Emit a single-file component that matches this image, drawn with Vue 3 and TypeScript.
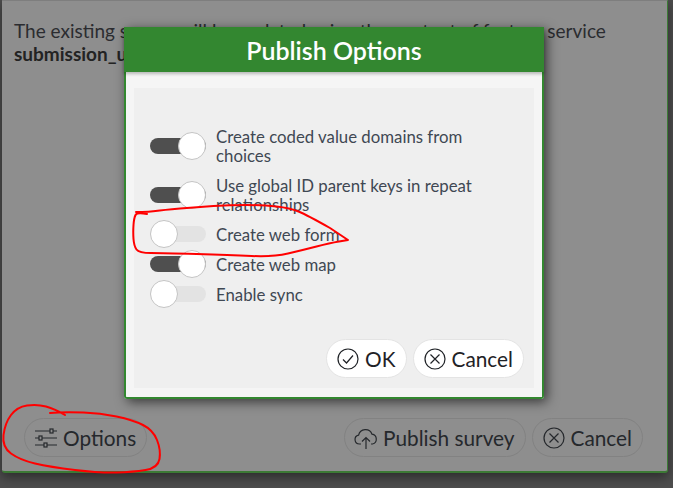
<script setup lang="ts">
interface OptionRow {
  label: string
  on: boolean
}

const options: OptionRow[] = [
  { label: 'Create coded value domains from choices', on: true },
  { label: 'Use global ID parent keys in repeat relationships', on: true },
  { label: 'Create web form', on: false },
  { label: 'Create web map', on: true },
  { label: 'Enable sync', on: false }
]

type Pt = [number, number]

// turn hand traced points into a smooth line
function smooth(pts: Pt[]): string {
  let d = `M${pts[0][0]} ${pts[0][1]}`
  for (let i = 1; i < pts.length - 1; i++) {
    const mx = (pts[i][0] + pts[i + 1][0]) / 2
    const my = (pts[i][1] + pts[i + 1][1]) / 2
    d += ` Q${pts[i][0]} ${pts[i][1]} ${mx} ${my}`
  }
  const last = pts[pts.length - 1]
  return d + ` L${last[0]} ${last[1]}`
}

const formCircle = smooth([
  [147, 214], [137, 212], [134, 218], [133, 232], [134, 246], [139, 253], [163, 253],
  [230, 255], [273, 257], [303, 250], [330, 243], [348, 240]
]) + ' L330 228 ' + smooth([
  [330, 228], [307, 215], [290, 208], [263, 205], [230, 205], [197, 207], [163, 210], [148, 212], [136, 212]
])

const optionsCircle = smooth([
  [65, 415], [55, 409], [37, 404], [17, 407], [5, 423], [2, 447], [20, 460], [50, 467],
  [100, 473], [133, 472], [158, 468], [161, 450], [153, 430], [133, 420], [100, 413], [67, 412], [50, 413]
])
</script>

<template>
  <div class="screen">
    <div class="panel">
      <p class="message">
        The existing survey will be updated using the content of feature service
        <b>submission_update</b>
      </p>
      <div class="footer">
        <button class="btn">
          <svg class="icon" viewBox="0 0 24 24" fill="none" stroke="currentColor" stroke-width="1.2">
            <path d="M1 5H16M19 5H23M1 12H5M8 12H23M1 19H10M13 19H23" />
            <rect x="16" y="3" width="3" height="4" />
            <rect x="5" y="10" width="3" height="4" />
            <rect x="10" y="17" width="3" height="4" />
          </svg>
          Options
        </button>
        <div class="footer-right">
          <button class="btn">
            <svg class="icon" viewBox="0 0 24 24" fill="none" stroke="currentColor" stroke-width="1.2">
              <path d="M7 18H5.5A4.5 4.5 0 0 1 4.6 9.1 7 7 0 0 1 18 8.2 5 5 0 0 1 18.5 18H17" />
              <path d="M12 23V12M8 15.5L12 11.5L16 15.5" />
            </svg>
            Publish survey
          </button>
          <button class="btn">
            <svg class="icon" viewBox="0 0 24 24" fill="none" stroke="currentColor" stroke-width="1.2">
              <circle cx="12" cy="12" r="10" />
              <path d="M7.5 7.5L16.5 16.5M16.5 7.5L7.5 16.5" />
            </svg>
            Cancel
          </button>
        </div>
      </div>
    </div>

    <div class="modal">
      <div class="modal-head">Publish Options</div>
      <div class="modal-body">
        <div class="content">
          <div class="rows">
            <div v-for="opt in options" :key="opt.label" class="row">
              <span :class="{ toggle: true, toggleOn: opt.on }"><i class="knob"></i></span>
              <span class="label">{{ opt.label }}</span>
            </div>
          </div>
          <div class="actions">
            <button class="btn btnLight">
              <svg class="icon" viewBox="0 0 24 24" fill="none" stroke="currentColor" stroke-width="1.2">
                <circle cx="12" cy="12" r="10" />
                <path d="M7 12.5L10.5 16L17 8.5" />
              </svg>
              OK
            </button>
            <button class="btn btnLight">
              <svg class="icon" viewBox="0 0 24 24" fill="none" stroke="currentColor" stroke-width="1.2">
                <circle cx="12" cy="12" r="10" />
                <path d="M7.5 7.5L16.5 16.5M16.5 7.5L7.5 16.5" />
              </svg>
              Cancel
            </button>
          </div>
        </div>
      </div>
    </div>

    <svg class="marks" viewBox="0 0 673 488" fill="none" stroke="#f00" stroke-width="2" stroke-linejoin="round" stroke-linecap="round">
      <path :d="formCircle" />
      <path :d="optionsCircle" />
    </svg>
  </div>
</template>

<style scoped>
.screen {
  position: relative;
  width: 673px;
  height: 488px;
  overflow: hidden;
  background: #4d4d4d;
  font-family: Lato, "Open Sans", sans-serif;
  color: #25282c;
}

.panel {
  display: flex;
  flex-direction: column;
  justify-content: space-between;
  box-sizing: border-box;
  width: 666px;
  height: 473px;
  margin-left: 2px;
  padding: 18px 24px 14px 12px;
  background: #8e8e8e;
  border-top: 1px solid #7e7e7e;
  border-right: 1px solid #3c7a35;
  border-bottom: 2px solid #3c7a35;
  border-radius: 0 0 3px 3px;
  box-shadow: 0 4px 12px rgba(0, 0, 0, 0.45);
}

.message {
  margin: 0;
  font-size: 19px;
  line-height: 23px;
  color: #2b2c30;
}

.message b {
  display: block;
  font-weight: 700;
  color: #232323;
}

.footer {
  display: flex;
  justify-content: space-between;
  padding-left: 10px;
}

.footer-right {
  display: flex;
  gap: 6px;
}

.btn {
  display: flex;
  align-items: center;
  gap: 5px;
  height: 39px;
  padding: 0 10px 0 9px;
  border: 1px solid #828282;
  border-radius: 20px;
  background: #8e8e8e;
  font-family: inherit;
  font-size: 20.8px;
  color: #25282c;
  white-space: nowrap;
}

.btnLight {
  background: #fff;
  border-color: #e4e4e4;
  color: #1f2226;
}

.icon {
  width: 24px;
  height: 24px;
  flex: none;
}

.modal {
  position: absolute;
  left: 124px;
  top: 27px;
  display: flex;
  flex-direction: column;
  box-sizing: border-box;
  width: 420px;
  height: 372px;
  background: #f5f5f5;
  border-radius: 0 0 3px 3px;
  box-shadow: 3px 3px 12px rgba(0, 0, 0, 0.6);
}

.modal-head {
  flex: none;
  height: 45px;
  line-height: 46px;
  text-align: center;
  background: #338730;
  color: #fff;
  font-size: 25px;
  font-weight: 600;
  box-shadow: 0 2px 3px rgba(0, 0, 0, 0.25);
  position: relative;
}

.modal-body {
  flex: 1;
  display: flex;
  min-height: 0;
  padding: 16px 8px 9px 8px;
  border: solid #338730;
  border-width: 0 2px 2px 2px;
  border-radius: 0 0 3px 3px;
}

.content {
  flex: 1;
  display: flex;
  flex-direction: column;
  justify-content: space-between;
  padding: 33px 10px 10px 16px;
  background: #efefef;
}

.rows {
  display: flex;
  flex-direction: column;
}

.row {
  display: flex;
  align-items: center;
  gap: 10px;
  padding: 5.5px 0;
}

.toggle {
  position: relative;
  flex: none;
  width: 56px;
  height: 16px;
  border-radius: 8px;
  background: #e3e3e3;
}

.toggleOn {
  background: #4f4f4f;
}

.knob {
  position: absolute;
  left: 0;
  top: -6px;
  box-sizing: border-box;
  width: 28px;
  height: 28px;
  border: 1px solid #c4c4c4;
  border-radius: 50%;
  background: #fff;
}

.toggleOn .knob {
  left: 28px;
}

.label {
  width: 280px;
  font-size: 16.8px;
  line-height: 19px;
  color: #3f4853;
}

.actions {
  display: flex;
  justify-content: flex-end;
  gap: 6px;
}

.marks {
  position: absolute;
  inset: 0;
  width: 673px;
  height: 488px;
  pointer-events: none;
}
</style>
